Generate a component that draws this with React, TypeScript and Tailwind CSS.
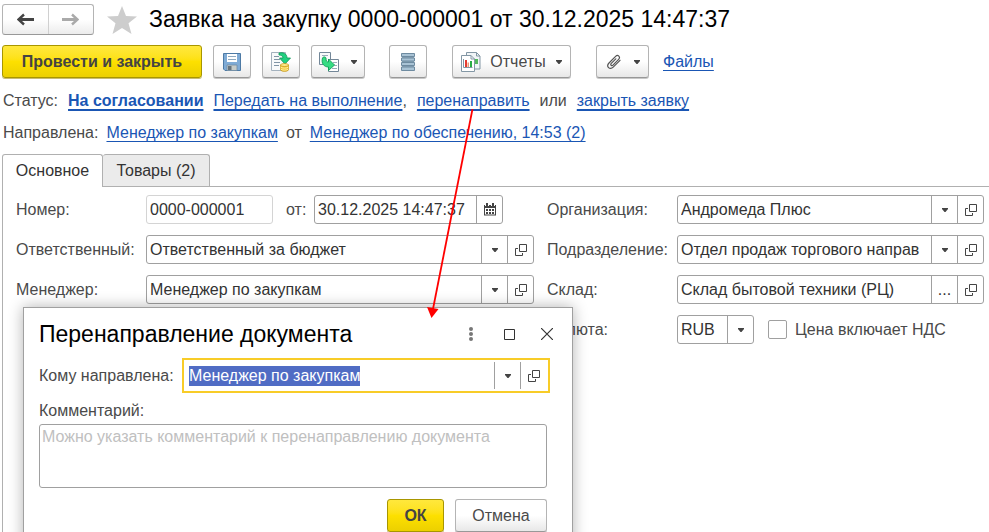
import { useEffect, useRef } from "react";
import type { ReactNode } from "react";

const FIELD = "box-content flex h-[27px] min-w-0 overflow-hidden rounded-[3px] border border-[#a0a0a0] bg-white";
const TOOL =
  "flex h-[33px] items-center justify-center rounded-[3px] border border-[#b4b4b4] border-b-[#989898] bg-linear-to-b from-white from-50% to-[#e8e8e8] text-[#4a4a4a] shadow-[0_1px_0_#c8c8c8]";
const YELLOW =
  "flex h-[33px] items-center justify-center rounded-[3px] border border-[#a89600] bg-linear-to-b from-[#ffe83c] via-[#fde000] to-[#ecd000] font-bold text-[#444] shadow-[0_1px_0_#c8bc70]";
const LINK =
  "text-[#1a56b4] underline underline-offset-3 [text-decoration-skip-ink:none]";

function Caret() {
  return (
    <svg width="6" height="4" viewBox="0 0 6 4" aria-hidden="true">
      <path d="M0 0h6v1L3.5 4h-1L0 1z" fill="#444" />
    </svg>
  );
}

function OpenIcon() {
  return (
    <svg width="12" height="12" viewBox="0 0 12 12" fill="none" stroke="#444" aria-hidden="true">
      <path d="M4.500.500h7v7h-7z" />
      <path d="M3 4.500H.5v7h7V9" />
    </svg>
  );
}

function CalendarIcon() {
  return (
    <svg width="12" height="13" viewBox="0 0 12 13" aria-hidden="true">
      <path d="M0 2h12v10.500H0z" fill="#444" />
      <path d="M1 5h10v6.500H1z" fill="#fff" />
      <path d="M2 0h2v3H2zM8 0h2v3H8z" fill="#444" />
      <path d="M1 1h1v2H1zM4 1h1v2H4zM7 1h1v2H7zM10 1h1v2h-1z" fill="#fff" />
      <path d="M2 6h2v2H2zM5 6h2v2H5zM8 6h2v2H8zM2 9h2v2H2zM5 9h2v2H5zM8 9h2v2H8z" fill="#444" />
    </svg>
  );
}

function SaveIcon() {
  return (
    <svg width="18" height="18" viewBox="0 0 18 18" aria-hidden="true">
      <path d="M.5.500h17v17H2l-1.500-1.500z" fill="#7fabd6" stroke="#4d7aa5" />
      <path d="M4 1h10v8H4z" fill="#fff" />
      <path d="M5 3.500h8M5 6.500h8" stroke="#8fa9bf" />
      <path d="M4 12h10v5.500H4z" fill="#c6cbc8" stroke="#6e8ba3" strokeWidth=".8" />
      <path d="M5 13h3.500v4H5z" fill="#66737d" />
    </svg>
  );
}

function PostIcon() {
  return (
    <svg width="20" height="20" viewBox="0 0 20 20" aria-hidden="true">
      <path d="M.5.500h14v18H.5z" fill="#f8fafb" stroke="#a3b1bd" />
      <path d="M3 4.500h5M3 7.500h6M3 10.500h6M3 13.500h5" stroke="#8195a6" />
      <path d="M8 1c4-1 8 .5 8 5h3.500L14 12 8.500 6h3.500C12 4 10 3 8 3z" fill="#20d080" stroke="#0d9555" strokeWidth=".8" />
      <path d="M9.500 13h8v5c-1 1.800-7 1.800-8 0z" fill="#f3c631" stroke="#c39212" strokeWidth=".8" />
      <ellipse cx="13.500" cy="13" rx="4" ry="1.500" fill="#ffe98b" stroke="#c39212" strokeWidth=".7" />
      <path d="M9.500 15c1 1.500 7 1.500 8 0M9.500 17c1 1.500 7 1.500 8 0" fill="none" stroke="#fff0a6" />
    </svg>
  );
}

function CreateIcon() {
  return (
    <svg width="20" height="20" viewBox="0 0 20 20" aria-hidden="true">
      <path d="M.5.500h11v12H.5z" fill="#f8fafb" stroke="#738798" />
      <path d="M3 3.500h6" stroke="#9aabb8" />
      <path d="M9.500 7.500h10v12h-10z" fill="#fff" stroke="#738798" />
      <path d="M14 10.500h4M15 13.500h3M13 16.500h5" stroke="#9aabb8" />
      <path d="M3.500 6c.5-1.500 3-1.500 3.500 0 0 3 .5 4 2.500 4V7l6 6-6 5.500V15C5 15 2 11.500 3.500 6z" fill="#37dc83" stroke="#0e9f56" strokeWidth=".9" />
    </svg>
  );
}

function ListIcon() {
  return (
    <svg width="14" height="18" viewBox="0 0 14 18" aria-hidden="true">
      <path d="M1 0h12v18H1z" fill="#8ba6b9" />
      <path d="M.5.500h13v3H.5zM.5 5h13v3H.5zM.5 9.500h13v3H.5zM.5 14h13v3.500H.5z" fill="#a9c3d5" stroke="#6e8ba0" />
    </svg>
  );
}

function ReportIcon() {
  return (
    <svg width="20" height="20" viewBox="0 0 20 20" aria-hidden="true">
      <path d="M5.500.500h10l3.500 3.500v13H5.500z" fill="#f1f5f7" stroke="#8397a5" />
      <path d="M15.500.500V4H19" fill="none" stroke="#8397a5" />
      <path d="M14 7h3v5h-3z" fill="#53b95d" />
      <path d="M.5 3.500h9.500l3.500 3.500v12.500H.5z" fill="#fff" stroke="#8397a5" />
      <path d="M10 3.500V7h3.500" fill="none" stroke="#8397a5" />
      <path d="M2.500 7v8.500h9" fill="none" stroke="#8397a5" />
      <path d="M4 8h2v7H4z" fill="#e33b32" />
      <path d="M6.500 10.500H8V15H6.500z" fill="#ef9a77" />
      <path d="M9 9h2v6H9z" fill="#29ae45" />
    </svg>
  );
}

function ClipIcon() {
  return (
    <svg width="16" height="16" viewBox="0 0 16 16" fill="none" stroke="#555" strokeWidth="1.200" strokeLinecap="round" aria-hidden="true">
      <path d="M9.800 4.800 5.300 9.400c-1.300 1.400.4 3 1.700 1.700l5.600-5.700c2.300-2.400-.7-5.300-3-3L3 9c-3.300 3.400.8 7.600 4.200 4.200L14 6.300" />
    </svg>
  );
}

function NavArrow({ color, flip }: { color: string; flip?: boolean }) {
  return (
    <svg width="17" height="13" viewBox="0 0 17 13" fill="none" stroke={color} aria-hidden="true">
      <path d={flip ? "M0 6.500h14" : "M17 6.500H3"} strokeWidth="3" />
      <path d={flip ? "m10 1.500 5.500 5-5.500 5" : "m7 1.500-5.500 5 5.500 5"} strokeWidth="2.400" />
    </svg>
  );
}

function FieldButton({ label, children }: { label: string; children: ReactNode }) {
  return (
    <button type="button" aria-label={label} className="flex w-[26px] shrink-0 items-center justify-center border-l border-[#a0a0a0]">
      {children}
    </button>
  );
}

function Lookup({ id, label, value, more }: { id: string; label: string; value: string; more?: boolean }) {
  return (
    <div className="flex items-center">
      <label htmlFor={id} className="w-[130px] shrink-0 whitespace-nowrap">{label}</label>
      <div className={FIELD + " flex-1"}>
        <input id={id} defaultValue={value} className="min-w-0 flex-1 pl-[3px] text-[#333] outline-none" />
        <FieldButton label="Выбрать">{more ? <span className="text-[#333]">...</span> : <Caret />}</FieldButton>
        <FieldButton label="Открыть"><OpenIcon /></FieldButton>
      </div>
    </div>
  );
}

function RedirectDialog() {
  const target = useRef<HTMLInputElement>(null);
  useEffect(() => {
    target.current?.focus();
    target.current?.select();
  }, []);
  return (
    <section role="dialog" aria-labelledby="dlg-title" className="absolute top-[307px] left-[23px] w-[550px] border border-[#a0a0a0] bg-white px-[15px] pb-4 shadow-[0_0_14px_rgba(0,0,0,0.3)]">
      <header className="flex h-[50px] items-center pt-0.5">
        <h2 id="dlg-title" className="flex-1 text-[23px] text-black">Перенаправление документа</h2>
        <div className="flex items-center gap-[18px]">
          <button type="button" aria-label="Ещё" className="flex w-5 justify-center">
            <svg width="4" height="14" viewBox="0 0 4 14" fill="#777"><circle cx="2" cy="2" r="2" /><circle cx="2" cy="7" r="2" /><circle cx="2" cy="12" r="2" /></svg>
          </button>
          <button type="button" aria-label="Развернуть" className="flex w-5 justify-center">
            <svg width="11" height="11" viewBox="0 0 11 11" fill="none" stroke="#333"><path d="M.5.500h10v10H.5z" /></svg>
          </button>
          <button type="button" aria-label="Закрыть" className="flex w-5 justify-center">
            <svg width="12" height="12" viewBox="0 0 12 12" fill="none" stroke="#333" strokeWidth="1.200"><path d="m0 0 12 12M12 0 0 12" /></svg>
          </button>
        </div>
      </header>
      <div className="flex items-center pr-[7px]">
        <label htmlFor="target" className="w-[143px] shrink-0 whitespace-nowrap">Кому направлена:</label>
        <div className="flex h-[35px] flex-1 border-2 border-[#f8cc28] py-[2px] pr-[2px] pl-[5px]">
          <input id="target" ref={target} defaultValue="Менеджер по закупкам" className="min-w-0 flex-1 text-[#333] outline-none selection:bg-[#506cc4] selection:text-white" />
          <FieldButton label="Выбрать"><Caret /></FieldButton>
          <FieldButton label="Открыть"><OpenIcon /></FieldButton>
        </div>
      </div>
      <label htmlFor="comment" className="mt-[6px] mb-px block leading-6">Комментарий:</label>
      <textarea id="comment" placeholder="Можно указать комментарий к перенаправлению документа" className="block h-16 w-[508px] resize-none rounded-[3px] border border-[#a0a0a0] px-[2px] leading-6 outline-none placeholder:text-[#c0c0c0]" />
      <div className="mt-[11px] flex justify-end gap-[11px] pr-[10px]">
        <button type="button" className={YELLOW + " w-[57px]"}>ОК</button>
        <button type="button" className={TOOL + " w-[92px]"}>Отмена</button>
      </div>
    </section>
  );
}

export default function App() {
  return (
    <main className="relative flex min-h-screen flex-col overflow-hidden bg-white font-['Liberation_Sans',Arial,sans-serif] text-[16px] leading-5 text-[#4a4a4a]">
      <header className="flex items-center pt-1 pl-[2px]">
        <div className="flex h-[31px] w-[92px] rounded-[3px] border border-[#b4b4b4] border-b-[#989898] bg-linear-to-b from-white from-50% to-[#ececec]">
          <button type="button" aria-label="Назад" className="flex flex-1 items-center justify-center border-r border-[#d0d0d0]"><NavArrow color="#444" /></button>
          <button type="button" aria-label="Вперёд" className="flex flex-1 items-center justify-center"><NavArrow color="#aaa" flip /></button>
        </div>
        <button type="button" aria-label="В избранное" className="ml-[13px]">
          <svg width="30" height="28" viewBox="0 0 30 28"><path d="m15 0 4 10 11 .5-8.500 6.800L24.500 28 15 22l-9.500 6 3-10.700L0 10.500 11 10z" fill="#cdcdcd" /></svg>
        </button>
        <h1 className="ml-3 pb-0.5 text-[23px] leading-7 whitespace-nowrap text-black">Заявка на закупку 0000-000001 от 30.12.2025 14:47:37</h1>
      </header>

      <div className="mt-[10px] flex items-center pl-[2px]">
        <button type="button" className={YELLOW + " w-[200px]"}>Провести и закрыть</button>
        <button type="button" aria-label="Записать" className={TOOL + " ml-[11px] w-[38px]"}><SaveIcon /></button>
        <button type="button" aria-label="Провести" className={TOOL + " ml-[11px] w-[38px]"}><PostIcon /></button>
        <button type="button" aria-label="Создать на основании" className={TOOL + " ml-[11px] w-[54px] gap-3"}><CreateIcon /><Caret /></button>
        <button type="button" aria-label="Список" className={TOOL + " ml-6 w-[38px]"}><ListIcon /></button>
        <button type="button" className={TOOL + " ml-[25px] w-[119px]"}><ReportIcon /><span className="mr-[10px] ml-[9px]">Отчеты</span><Caret /></button>
        <button type="button" aria-label="Присоединенные файлы" className={TOOL + " ml-[25px] w-[53px] gap-3"}><ClipIcon /><Caret /></button>
        <a href="#files" className={LINK + " ml-[14px]"}>Файлы</a>
      </div>

      <p className="mt-[13px] flex gap-[10px] pl-[3px] whitespace-nowrap">
        <span>Статус:</span>
        <a href="#status" className={LINK + " font-bold decoration-2"}>На согласовании</a>
        <span><a href="#execute" className={LINK + " decoration-2"}>Передать на выполнение</a>,</span>
        <a href="#redirect" className={LINK + " decoration-2"}>перенаправить</a>
        <span>или</span>
        <a href="#close" className={LINK + " decoration-2"}>закрыть заявку</a>
      </p>
      <p className="mt-3 flex gap-2 pl-[3px] whitespace-nowrap">
        <span>Направлена:</span>
        <a href="#manager" className={LINK}>Менеджер по закупкам</a>
        <span>от</span>
        <a href="#supply" className={LINK}>Менеджер по обеспечению, 14:53 (2)</a>
      </p>

      <div role="tablist" className="mt-[11px] ml-[2px] flex text-[#333]">
        <button type="button" role="tab" aria-selected="true" className="z-10 h-8 w-[101px] rounded-t-[3px] border border-b-0 border-[#b0b0b0] bg-white">Основное</button>
        <button type="button" role="tab" aria-selected="false" className="h-8 w-[107px] rounded-t-[3px] border border-b-0 border-l-0 border-[#b0b0b0] bg-[#ebebeb]">Товары (2)</button>
      </div>
      <div role="tabpanel" className="ml-[2px] flex-1 border-l border-[#b0b0b0]">
        <div className="ml-[99px] border-t border-[#b0b0b0]" />
        <div className="grid grid-cols-[518fr_437fr] gap-x-[13px] pt-2 pr-[5px] pl-[13px]">
          <div className="flex flex-col gap-[11px]">
            <div className="flex items-center">
              <label htmlFor="number" className="w-[130px] shrink-0">Номер:</label>
              <input id="number" readOnly defaultValue="0000-000001" className="h-[29px] w-[127px] rounded-[3px] border border-[#d4d4d4] pl-[3px] text-[#333] outline-none" />
              <label htmlFor="date" className="ml-[13px] w-7">от:</label>
              <div className={FIELD + " w-[187px]"}>
                <input id="date" defaultValue="30.12.2025 14:47:37" className="min-w-0 flex-1 pl-[3px] text-[#333] outline-none" />
                <FieldButton label="Календарь"><CalendarIcon /></FieldButton>
              </div>
            </div>
            <Lookup id="responsible" label="Ответственный:" value="Ответственный за бюджет" />
            <Lookup id="manager" label="Менеджер:" value="Менеджер по закупкам" />
          </div>
          <div className="flex flex-col gap-[11px]">
            <Lookup id="organization" label="Организация:" value="Андромеда Плюс" />
            <Lookup id="department" label="Подразделение:" value="Отдел продаж торгового направ" />
            <Lookup id="warehouse" label="Склад:" value="Склад бытовой техники (РЦ)" more />
            <div className="flex items-center">
              <label htmlFor="currency" className="w-[130px] shrink-0">Валюта:</label>
              <div className={FIELD + " w-[75px]"}>
                <div className="grid flex-1">
                  <select id="currency" className="col-start-1 row-start-1 appearance-none bg-transparent pl-[3px] text-[#333] outline-none"><option>RUB</option></select>
                  <span className="pointer-events-none col-start-1 row-start-1 flex w-[26px] items-center justify-center justify-self-end border-l border-[#a0a0a0]"><Caret /></span>
                </div>
              </div>
              <input id="vat" type="checkbox" className="ml-[14px] size-[19px] appearance-none rounded-[2px] border border-[#a0a0a0]" />
              <label htmlFor="vat" className="ml-2 whitespace-nowrap">Цена включает НДС</label>
            </div>
          </div>
        </div>
      </div>

      <RedirectDialog />

      <svg width="60" height="210" viewBox="0 0 60 210" className="pointer-events-none absolute top-[109px] left-[420px]" aria-hidden="true">
        <path d="M52.500 0 13 200" stroke="#f00" strokeWidth="1.800" />
        <path d="M7 198 18.500 200 11.500 209z" fill="#f00" />
      </svg>
    </main>
  );
}
